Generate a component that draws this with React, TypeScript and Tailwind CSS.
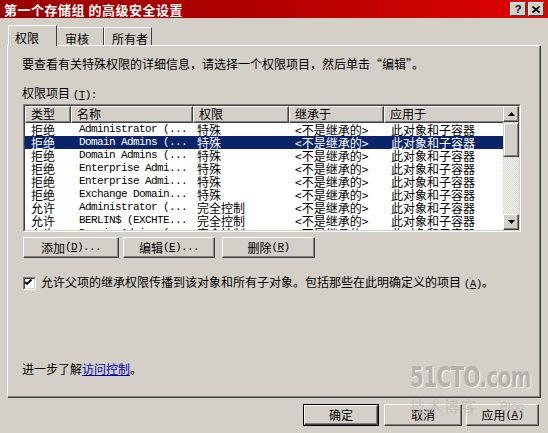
import type { ReactNode } from 'react';

const cjk = "font-['SimSun','Noto_Sans_CJK_SC',sans-serif]";

type Row = { type: string; name: string; perm: string; from: string; apply: string };

const rows: Row[] = [
  { type: '拒绝', name: 'Administrator (...', perm: '特殊', from: '<不是继承的>', apply: '此对象和子容器' },
  { type: '拒绝', name: 'Domain Admins (...', perm: '特殊', from: '<不是继承的>', apply: '此对象和子容器' },
  { type: '拒绝', name: 'Domain Admins (...', perm: '特殊', from: '<不是继承的>', apply: '此对象和子容器' },
  { type: '拒绝', name: 'Enterprise Admi...', perm: '特殊', from: '<不是继承的>', apply: '此对象和子容器' },
  { type: '拒绝', name: 'Enterprise Admi...', perm: '特殊', from: '<不是继承的>', apply: '此对象和子容器' },
  { type: '拒绝', name: 'Exchange Domain...', perm: '特殊', from: '<不是继承的>', apply: '此对象和子容器' },
  { type: '允许', name: 'Administrator (...', perm: '完全控制', from: '<不是继承的>', apply: '此对象和子容器' },
  { type: '允许', name: 'BERLIN$ (EXCHTE...', perm: '完全控制', from: '<不是继承的>', apply: '此对象和子容器' },
  { type: '允许', name: 'Domain Admins (...', perm: '完全控制', from: '<不是继承的>', apply: '此对象和子容器' },
];

const columns = [
  { label: '类型', w: 'w-[46px]' },
  { label: '名称', w: 'w-[122px]' },
  { label: '权限', w: 'w-[96px]' },
  { label: '继承于', w: 'w-[95px]' },
  { label: '应用于', w: 'w-[121px]' },
];

// ASCII part of a label, narrow like the system font
function Mono({ children }: { children: ReactNode }) {
  return <span className="font-['Liberation_Mono',monospace] text-[11px] tracking-[-0.6px]">{children}</span>;
}

function Key({ children }: { children: ReactNode }) {
  return <span className="underline underline-offset-1">{children}</span>;
}

function Btn({ children, className = '' }: { children: ReactNode; className?: string }) {
  return (
    <button
      className={`h-[21px] p-0 bg-[#d4d0c8] border border-t-white border-l-white border-r-[#404040] border-b-[#404040] shadow-[inset_-1px_-1px_0_#808080] text-[12px] leading-none whitespace-nowrap text-black flex items-center justify-center ${className}`}
    >
      {children}
    </button>
  );
}

function ScrollArrow({ up }: { up?: boolean }) {
  return (
    <div className="w-[16px] h-[16px] bg-[#d4d0c8] border border-t-white border-l-white border-r-[#404040] border-b-[#404040] shadow-[inset_-1px_-1px_0_#808080] flex items-center justify-center">
      <svg width="7" height="4" viewBox="0 0 7 4">
        {up ? <path d="M3.5 0 L7 4 L0 4 Z" fill="#000" /> : <path d="M0 0 L7 0 L3.5 4 Z" fill="#000" />}
      </svg>
    </div>
  );
}

function PermList() {
  return (
    <div className="w-[498px] h-[128px] border border-t-[#808080] border-l-[#808080] border-r-white border-b-white">
      <div className="w-full h-full border border-t-[#404040] border-l-[#404040] border-r-[#d4d0c8] border-b-[#d4d0c8] bg-white flex">
        <div className="flex-1 overflow-hidden">
          {/* header */}
          <div className="flex h-[17px]">
            {columns.map((c) => (
              <div
                key={c.label}
                className={`${c.w} shrink-0 h-full bg-[#d4d0c8] border border-t-white border-l-white border-r-[#404040] border-b-[#404040] shadow-[inset_-1px_-1px_0_#808080] pl-[5px] text-[12px] leading-[14px] text-black`}
              >
                {c.label}
              </div>
            ))}
          </div>
          {rows.map((r, i) => {
            const sel = i === 1;
            return (
              <div
                key={i}
                className={`flex items-center h-[13px] text-[12px] leading-none whitespace-nowrap ${sel ? 'bg-[#0a246a] text-white' : 'text-black'}`}
              >
                <div className="w-[46px] shrink-0 pl-[6px]">{r.type}</div>
                <div className="w-[122px] shrink-0 pl-[8px] font-['Liberation_Mono',monospace] text-[11px] tracking-[-0.6px]">{r.name}</div>
                <div className="w-[96px] shrink-0 pl-[4px]">{r.perm}</div>
                <div className="w-[95px] shrink-0 pl-[6px]">{r.from}</div>
                <div className="w-[121px] shrink-0 pl-[7px]">{r.apply}</div>
              </div>
            );
          })}
        </div>
        {/* vertical scrollbar */}
        <div className="w-[16px] shrink-0 flex flex-col">
          <ScrollArrow up />
          <div className="h-[35px] bg-[#d4d0c8] border border-t-[#d4d0c8] border-l-[#d4d0c8] border-r-[#404040] border-b-[#404040] shadow-[inset_1px_1px_0_white,inset_-1px_-1px_0_#808080]" />
          <div className="flex-1 bg-[repeating-conic-gradient(#ffffff_0_25%,#d4d0c8_0_50%)] bg-[length:2px_2px]" />
          <ScrollArrow />
        </div>
      </div>
    </div>
  );
}

export default function App() {
  return (
    <div className={`relative w-[548px] h-[433px] bg-[#d4d0c8] flex flex-col text-black ${cjk}`}>
      {/* caption */}
      <div className="h-[18px] bg-gradient-to-r from-[#9a0000] via-[#b40000] to-[#e00404] flex items-center justify-between pl-[4px] pr-[4px]">
        <span className="text-white text-[13px] font-bold leading-none tracking-[0.5px]">第一个存储组 的高级安全设置</span>
        <div className="flex gap-[2px]">
          <div className="w-[16px] h-[14px] bg-[#d4d0c8] border border-t-white border-l-white border-r-[#404040] border-b-[#404040] flex items-center justify-center text-[11px] font-bold leading-none font-['Liberation_Sans',sans-serif]">
            ?
          </div>
          <div className="w-[16px] h-[14px] bg-[#d4d0c8] border border-t-white border-l-white border-r-[#404040] border-b-[#404040] flex items-center justify-center">
            <svg width="8" height="7" viewBox="0 0 8 7">
              <path d="M0.5 0.5 L7.5 6.5 M7.5 0.5 L0.5 6.5" stroke="#000" strokeWidth="1.6" />
            </svg>
          </div>
        </div>
      </div>

      {/* tabs */}
      <div className="pl-[8px] mt-[6px] flex items-end h-[21px]">
        <div className="h-[21px] w-[49px] bg-[#d4d0c8] border-t border-l border-t-white border-l-white border-r border-r-[#404040] rounded-tl-[2px] text-[12px] pl-[6px] pt-[3px] relative z-10 -mb-px">
          权限
        </div>
        <div className="h-[18px] w-[47px] border-t border-t-white border-r border-r-[#404040] text-[12px] pl-[8px] pt-[2px]">
          审核
        </div>
        <div className="h-[18px] w-[48px] border-t border-t-white border-l border-l-white border-r border-r-[#404040] text-[12px] pl-[7px] pt-[2px]">
          所有者
        </div>
      </div>

      {/* tab panel */}
      <div className="ml-[7px] w-[534px] h-[353px] border border-t-white border-l-white border-r-[#404040] border-b-[#404040] shadow-[inset_-1px_-1px_0_#808080] flex flex-col pl-[14px] pt-[11px]">
        <p className="text-[12px] leading-[14px]">要查看有关特殊权限的详细信息，请选择一个权限项目，然后单击“编辑”。</p>
        <p className="text-[12px] leading-[14px] mt-[15px]">
          权限项目 <Mono>(<Key>T</Key>):</Mono>
        </p>
        <div className="mt-[2px] ml-px">
          <PermList />
        </div>
        <div className="flex gap-[4px] mt-[5px] ml-px">
          <Btn className="w-[96px]">
            添加<Mono>(<Key>D</Key>)...</Mono>
          </Btn>
          <Btn className="w-[92px]">
            编辑<Mono>(<Key>E</Key>)...</Mono>
          </Btn>
          <Btn className="w-[93px] ml-[3px]">
            删除<Mono>(<Key>R</Key>)</Mono>
          </Btn>
        </div>
        <label className="flex items-center gap-[5px] mt-[17px] ml-px text-[12px] leading-[14px]">
          <span className="w-[13px] h-[13px] border border-t-[#808080] border-l-[#808080] border-r-white border-b-white">
            <span className="block w-full h-full bg-white border border-t-[#404040] border-l-[#404040] border-r-[#d4d0c8] border-b-[#d4d0c8]">
              <svg width="9" height="9" viewBox="0 0 9 9" className="-mt-px -ml-px">
                <path d="M1 4 L3 6 L7.5 1.5" stroke="#000" strokeWidth="1.8" fill="none" />
              </svg>
            </span>
          </span>
          <span>
            允许父项的继承权限传播到该对象和所有子对象。包括那些在此明确定义的项目 <Mono>(<Key>A</Key>)</Mono>。
          </span>
        </label>
        <p className="text-[12px] leading-[14px] mt-[71px]">
          进一步了解<span className="text-[#0000b0] underline underline-offset-1">访问控制</span>。
        </p>
      </div>

      {/* dialog buttons */}
      <div className="flex justify-end gap-[4px] pr-[9px] mt-[6px]">
        <div className="w-[76px] h-[22px] border border-black mr-px">
          <Btn className="w-full h-full">确定</Btn>
        </div>
        <Btn className="w-[78px] h-[22px]">取消</Btn>
        <Btn className="w-[73px] h-[22px]">
          应用<Mono>(<Key>A</Key>)</Mono>
        </Btn>
      </div>

      {/* site stamp over the lower right corner */}
      <div className="absolute left-[410px] top-[364px] pointer-events-none select-none flex flex-col items-start opacity-80">
        <span className="font-['DejaVu_Sans_Condensed',sans-serif] font-bold text-[22px] leading-none text-[#b0aca4] tracking-[-0.5px] scale-y-125 origin-top-left [text-shadow:1px_1px_0_#fff]">
          51CTO.com
        </span>
        <div className="flex items-end gap-[22px] mt-[12px]">
          <span className="text-[15px] leading-none text-[#c0bcb4] tracking-[2px]">技术博客</span>
          <span className="font-['Liberation_Sans',sans-serif] text-[12px] leading-none text-[#bcb8b0] -mt-[6px]">Blog</span>
        </div>
      </div>
    </div>
  );
}
